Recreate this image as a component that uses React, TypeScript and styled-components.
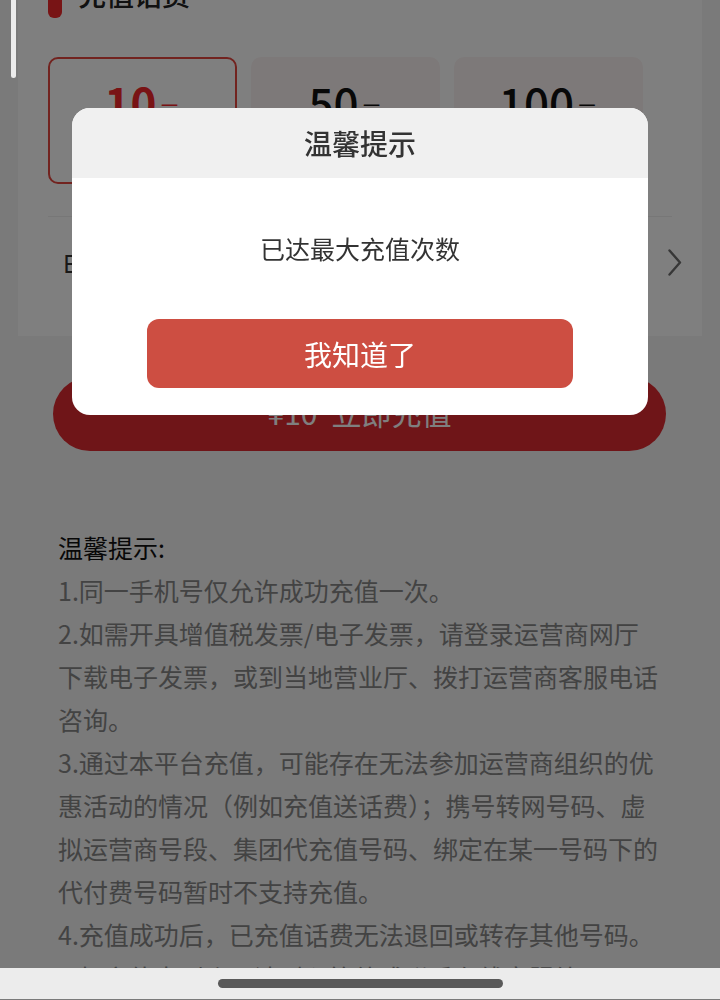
import React from "react";
import styled, { createGlobalStyle } from "styled-components";

const GlobalStyle = createGlobalStyle`
  html, body {
    margin: 0;
    padding: 0;
    overflow: hidden;
  }
  body {
    font-family: "Noto Sans CJK SC", "Noto Sans", sans-serif;
    background: #f4f4f4;
  }
  * { box-sizing: border-box; }
`;

const Page = styled.div`
  height: 100vh;
  overflow: hidden;
  background: #f4f4f4;
`;

const Content = styled.div`
  margin-top: -30px;
`;

const Card = styled.section`
  margin: 0 18px;
  background: #ffffff;
  padding: 0 30px 29px;
`;

const TitleRow = styled.div`
  height: 48px;
  display: flex;
  align-items: flex-end;
  gap: 16px;
`;

const TitleBar = styled.span`
  width: 14px;
  height: 32px;
  border-radius: 0 0 6px 6px;
  background: #f0282a;
`;

const Title = styled.h2`
  margin: 0 0 10px;
  font-size: 28px;
  line-height: 1;
  font-weight: 500;
  color: #222;
`;

const Options = styled.div`
  margin-top: 39px;
  display: grid;
  grid-template-columns: repeat(3, 189px);
  gap: 14px;
`;

const Option = styled.div<{ $active?: boolean }>`
  height: 127px;
  border-radius: 10px;
  border: 2px solid ${(p) => (p.$active ? "#e4463f" : "transparent")};
  background: ${(p) => (p.$active ? "#ffffff" : "#fbf3f3")};
  display: flex;
  flex-direction: column;
  align-items: center;
  padding-top: 16px;
  color: ${(p) => (p.$active ? "#f2262a" : "#111")};
`;

const Amount = styled.div<{ $active?: boolean }>`
  font-size: 44px;
  line-height: 54px;
  font-weight: ${(p) => (p.$active ? 700 : 500)};
  font-family: "Noto Sans CJK SC", "Roboto", sans-serif;
`;

const Unit = styled.span`
  font-size: 22px;
  font-weight: 400;
  margin-left: 2px;
`;

const Price = styled.div`
  font-size: 20px;
  color: #999;
`;

const Divider = styled.div`
  margin-top: 32px;
  height: 1px;
  background: #eeeeee;
`;

const PayRow = styled.div`
  height: 90px;
  display: flex;
  align-items: center;
  justify-content: space-between;
  padding-left: 15px;
`;

const PayLabel = styled.span`
  font-size: 24px;
  color: #333;
`;

const ChevronIcon = styled.svg`
  width: 14px;
  height: 27px;
  margin-right: -10px;
`;

const SubmitButton = styled.button`
  display: flex;
  align-items: center;
  justify-content: center;
  margin: 41px 54px 0 53px;
  width: calc(100% - 107px);
  height: 74px;
  padding: 0 0 5px;
  border: none;
  border-radius: 37px;
  background: #de2a30;
  color: #ffffff;
  font-family: inherit;
  font-size: 30px;
  gap: 14px;
`;

const Tips = styled.div`
  margin-top: 75px;
  padding: 0 58px;
`;

const TipsHead = styled.div`
  font-size: 25px;
  line-height: 43px;
  color: #111;
`;

const TipLine = styled.div`
  font-size: 25px;
  line-height: 43px;
  color: #878787;
  white-space: nowrap;
`;

const Overlay = styled.div`
  position: fixed;
  inset: 0;
  background: rgba(0, 0, 0, 0.5);
`;

const Dialog = styled.div`
  position: fixed;
  top: 108px;
  left: 72px;
  width: 576px;
  border-radius: 18px;
  overflow: hidden;
  background: #ffffff;
`;

const DialogHeader = styled.div`
  height: 70px;
  background: #f0f0f0;
  display: flex;
  align-items: center;
  justify-content: center;
  font-size: 28px;
  font-weight: 500;
  color: #333;
`;

const DialogBody = styled.div`
  padding: 52px 75px 27px;
  display: flex;
  flex-direction: column;
  align-items: center;
`;

const Message = styled.div`
  font-size: 25px;
  line-height: 36px;
  color: #333;
`;

const ConfirmButton = styled.button`
  margin-top: 53px;
  width: 100%;
  height: 69px;
  border: none;
  border-radius: 12px;
  background: #cd4e42;
  color: #ffffff;
  font-family: inherit;
  font-size: 28px;
`;

const ScrollThumb = styled.div`
  position: fixed;
  left: 11px;
  top: 0;
  width: 5px;
  height: 78px;
  border-radius: 0 0 3px 3px;
  background: #ececec;
`;

const NavBar = styled.div`
  position: fixed;
  left: 0;
  right: 0;
  bottom: 0;
  height: 32px;
  background: #ececec;
  border-bottom: 1px solid #7a7a7a;
  display: flex;
  justify-content: center;
  padding-top: 11px;
`;

const HomeIndicator = styled.div`
  width: 285px;
  height: 9px;
  border-radius: 5px;
  background: #595959;
`;

const options = [
  { value: 10, price: "售价 9.98元", active: true },
  { value: 50, price: "售价 49.90元" },
  { value: 100, price: "售价 99.80元" },
];

const tips: string[][] = [
  ["1.同一手机号仅允许成功充值一次。"],
  ["2.如需开具增值税发票/电子发票，请登录运营商网厅", "下载电子发票，或到当地营业厅、拨打运营商客服电话", "咨询。"],
  [
    "3.通过本平台充值，可能存在无法参加运营商组织的优",
    "惠活动的情况（例如充值送话费）；携号转网号码、虚",
    "拟运营商号段、集团代充值号码、绑定在某一号码下的",
    "代付费号码暂时不支持充值。",
  ],
  ["4.充值成功后，已充值话费无法退回或转存其他号码。"],
  ["5.如充值未到账，请耐心等待或联系在线客服处理。"],
];

export default function App() {
  return (
    <>
      <GlobalStyle />
      <Page>
        <Content>
          <Card>
            <TitleRow>
              <TitleBar />
              <Title>充值话费</Title>
            </TitleRow>
            <Options>
              {options.map((o) => (
                <Option key={o.value} $active={o.active}>
                  <Amount $active={o.active}>
                    {o.value}
                    <Unit>元</Unit>
                  </Amount>
                  <Price>{o.price}</Price>
                </Option>
              ))}
            </Options>
            <Divider />
            <PayRow>
              <PayLabel>E卡支付</PayLabel>
              <ChevronIcon viewBox="0 0 14 27" fill="none">
                <polyline
                  points="1.5,1.5 12,13.5 1.5,25.5"
                  stroke="#6e6e6e"
                  strokeWidth="2.4"
                  strokeLinecap="round"
                  strokeLinejoin="round"
                />
              </ChevronIcon>
            </PayRow>
          </Card>
          <SubmitButton>
            <span>¥10</span>
            <span>立即充值</span>
          </SubmitButton>
          <Tips>
            <TipsHead>温馨提示:</TipsHead>
            {tips.map((group, i) =>
              group.map((line, j) => <TipLine key={`${i}-${j}`}>{line}</TipLine>)
            )}
          </Tips>
        </Content>
      </Page>
      <Overlay />
      <Dialog>
        <DialogHeader>温馨提示</DialogHeader>
        <DialogBody>
          <Message>已达最大充值次数</Message>
          <ConfirmButton>我知道了</ConfirmButton>
        </DialogBody>
      </Dialog>
      <ScrollThumb />
      <NavBar>
        <HomeIndicator />
      </NavBar>
    </>
  );
}
